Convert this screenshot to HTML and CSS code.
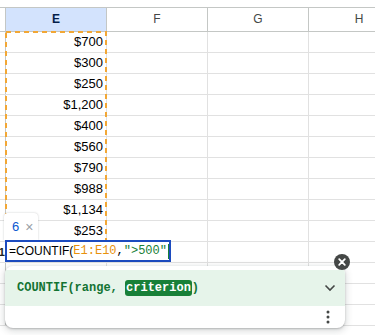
FILE: index.html
```html
<!DOCTYPE html>
<html lang="en">

<head>
    <meta charset="UTF-8">
    <meta name="viewport" content="width=device-width, initial-scale=1.0">
    <title>countif</title>
    <link rel="stylesheet" href="styles.css">
</head>

<body>
    <div class="sheet">
        <div class="row head">
            <div class="rh"></div>
            <div class="cell hc selCol">E</div>
            <div class="cell hc">F</div>
            <div class="cell hc">G</div>
            <div class="cell hc">H</div>
        </div>
        <div class="row"><div class="rh"></div><div class="cell">$700</div><div class="cell"></div><div class="cell"></div><div class="cell"></div></div>
        <div class="row"><div class="rh"></div><div class="cell">$300</div><div class="cell"></div><div class="cell"></div><div class="cell"></div></div>
        <div class="row"><div class="rh"></div><div class="cell">$250</div><div class="cell"></div><div class="cell"></div><div class="cell"></div></div>
        <div class="row"><div class="rh"></div><div class="cell">$1,200</div><div class="cell"></div><div class="cell"></div><div class="cell"></div></div>
        <div class="row"><div class="rh"></div><div class="cell">$400</div><div class="cell"></div><div class="cell"></div><div class="cell"></div></div>
        <div class="row"><div class="rh"></div><div class="cell">$560</div><div class="cell"></div><div class="cell"></div><div class="cell"></div></div>
        <div class="row"><div class="rh"></div><div class="cell">$790</div><div class="cell"></div><div class="cell"></div><div class="cell"></div></div>
        <div class="row"><div class="rh"></div><div class="cell">$988</div><div class="cell"></div><div class="cell"></div><div class="cell"></div></div>
        <div class="row"><div class="rh"></div><div class="cell">$1,134</div><div class="cell"></div><div class="cell"></div><div class="cell"></div></div>
        <div class="row"><div class="rh"></div><div class="cell">$253</div><div class="cell"></div><div class="cell"></div><div class="cell"></div></div>
        <div class="row"><div class="rh active">11</div><div class="cell"></div><div class="cell"></div><div class="cell"></div><div class="cell"></div></div>
        <div class="row"><div class="rh"></div><div class="cell"></div><div class="cell"></div><div class="cell"></div><div class="cell"></div></div>
        <div class="row"><div class="rh"></div><div class="cell"></div><div class="cell"></div><div class="cell"></div><div class="cell"></div></div>
        <div class="row"><div class="rh"></div><div class="cell"></div><div class="cell"></div><div class="cell"></div><div class="cell"></div></div>

        <!-- dashed range E1:E10 -->
        <div class="rangeBox">
            <svg width="102" height="211" viewBox="0 0 102 211">
                <rect x="1" y="1" width="100" height="209" fill="none" stroke="#f2a735" stroke-width="2" stroke-dasharray="5 4"></rect>
            </svg>
        </div>

        <div class="chip"><span class="chipNum">6</span><span class="chipX">×</span></div>

        <div class="editor">
            <span class="fx">=COUNTIF(</span><span class="mono ref">E1:E10</span><span class="mono">,</span><span class="mono str">"&gt;500"</span><span class="caret"></span>
        </div>

        <div class="card">
            <div class="cardTop">
                <div class="sig">COUNTIF(range, <span class="arg">criterion</span>)</div>
                <svg class="chev" width="12" height="8" viewBox="0 0 12 8">
                    <path d="M1.5 1.5 L6 6 L10.5 1.5" fill="none" stroke="#444746" stroke-width="1.6"></path>
                </svg>
            </div>
            <div class="cardBottom">
                <svg width="4" height="14" viewBox="0 0 4 14">
                    <circle cx="2" cy="2" r="1.5" fill="#444746"></circle>
                    <circle cx="2" cy="7" r="1.5" fill="#444746"></circle>
                    <circle cx="2" cy="12" r="1.5" fill="#444746"></circle>
                </svg>
            </div>
        </div>

        <div class="closeBtn">
            <svg width="16" height="16" viewBox="0 0 16 16">
                <circle cx="8" cy="8" r="8" fill="#444746"></circle>
                <path d="M5.2 5.2 L10.8 10.8 M10.8 5.2 L5.2 10.8" stroke="#fff" stroke-width="1.8" stroke-linecap="round"></path>
            </svg>
        </div>
    </div>
</body>

</html>
```

FILE: styles.css
```css
body {
    margin: 0;
    overflow: hidden;
    background: #fff;
    font-family: "Liberation Sans", Arial, sans-serif;
}

.sheet {
    position: relative;
    padding-top: 7px;
    width: 375px;
    height: 328px;
    overflow: hidden;
}

.row {
    display: flex;
    height: 20px;
    border-bottom: 1px solid #e1e1e1;
}

.row.head {
    height: 23px;
    border-top: 1px solid #c4c7c5;
    border-bottom: 1px solid #c4c7c5;
}

.rh {
    width: 5px;
    flex: none;
    border-right: 1px solid #c4c7c5;
    overflow: hidden;
    font-size: 11px;
    line-height: 20px;
    color: #1f1f1f;
    text-align: right;
    direction: rtl;
}

.rh.active {
    font-weight: bold;
}

.cell {
    width: 97px;
    flex: none;
    border-right: 1px solid #e1e1e1;
    padding-right: 3px;
    text-align: right;
    font-size: 13px;
    line-height: 20px;
    color: #000;
}

.head .cell {
    width: 100px;
    padding: 0;
    text-align: center;
    font-size: 12px;
    line-height: 23px;
    color: #444746;
    border-right-color: #c4c7c5;
}

.head .selCol {
    background: #d3e3fd;
    color: #041e49;
    font-weight: bold;
}

.rangeBox {
    position: absolute;
    left: 5px;
    top: 31px;
    width: 102px;
    height: 211px;
}

.rangeBox svg {
    display: block;
}

.chip {
    position: absolute;
    left: 4px;
    top: 213px;
    width: 34px;
    height: 27px;
    background: #fff;
    border-radius: 4px 4px 0 0;
    box-shadow: 0 0 2px rgba(60, 64, 67, .3);
    display: flex;
    align-items: center;
    gap: 6px;
    padding-left: 8px;
    box-sizing: border-box;
    font-size: 13px;
}

.chipNum {
    color: #0b57d0;
}

.chipX {
    color: #9aa0a6;
    font-size: 14px;
}

.editor {
    position: absolute;
    left: 5px;
    top: 240px;
    width: 166px;
    height: 22px;
    box-sizing: border-box;
    border: 2px solid #1c4bbf;
    background: #fff;
    padding-left: 2px;
    display: flex;
    align-items: center;
    font-size: 12px;
    color: #000;
    white-space: nowrap;
}

.mono {
    font-family: "Liberation Mono", "DejaVu Sans Mono", monospace;
    font-size: 12px;
}

.ref {
    color: #e8910c;
}

.str {
    color: #188038;
}

.caret {
    width: 1px;
    height: 15px;
    background: #188038;
    margin-left: 1px;
}

.card {
    position: absolute;
    left: 5px;
    top: 266px;
    width: 340px;
    height: 62px;
    padding-top: 4px;
    box-sizing: border-box;
    background: #fff;
    border-radius: 8px;
    box-shadow: 0 1px 2px rgba(60, 64, 67, .3), 0 2px 6px 2px rgba(60, 64, 67, .15);
    overflow: hidden;
}

.cardTop {
    height: 36px;
    background: #e6f4ea;
    display: flex;
    align-items: center;
    justify-content: space-between;
    padding: 0 9px 0 12px;
}

.sig {
    font-family: "Liberation Mono", "DejaVu Sans Mono", monospace;
    font-size: 12px;
    font-weight: bold;
    color: #137333;
}

.arg {
    background: #188038;
    color: #fff;
    border-radius: 3px;
    padding: 1px 1px;
}

.chev {
    display: block;
}

.cardBottom {
    height: 22px;
    display: flex;
    align-items: center;
    justify-content: flex-end;
    padding-right: 15px;
}

.closeBtn {
    position: absolute;
    left: 334px;
    top: 254px;
    width: 16px;
    height: 16px;
}

.closeBtn svg {
    display: block;
}
```
